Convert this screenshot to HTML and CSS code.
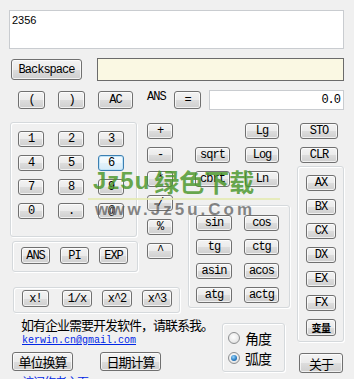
FILE: index.html
```html
<!DOCTYPE html>
<html>
<head>
<meta charset="utf-8">
<link rel="stylesheet" href="styles.css">
</head>
<body>
<div class="win">
  <div class="display">2356</div>
  <div class="row2">
    <button class="btn mono bksp">Backspace</button>
    <div class="yellow"></div>
  </div>
  <div class="row3">
    <button class="btn mono paren p1">(</button>
    <button class="btn mono paren p2">)</button>
    <button class="btn mono ac">AC</button>
    <span class="anslbl mono">ANS</span>
    <button class="btn mono eq">=</button>
    <div class="result mono">0.0</div>
  </div>
  <div class="main">
    <div class="colL">
      <div class="top">
        <div class="stack">
          <div class="group keypad">
            <button class="btn mono">1</button>
            <button class="btn mono">2</button>
            <button class="btn mono">3</button>
            <button class="btn mono">4</button>
            <button class="btn mono">5</button>
            <button class="btn mono focus">6</button>
            <button class="btn mono">7</button>
            <button class="btn mono">8</button>
            <button class="btn mono">9</button>
            <button class="btn mono">0</button>
            <button class="btn mono">.</button>
            <button class="btn mono">@</button>
          </div>
          <div class="group consts">
            <button class="btn mono">ANS</button>
            <button class="btn mono">PI</button>
            <button class="btn mono">EXP</button>
          </div>
        </div>
        <div class="ops">
          <button class="btn mono">+</button>
          <button class="btn mono">-</button>
          <button class="btn mono">*</button>
          <button class="btn mono">/</button>
          <button class="btn mono">%</button>
          <button class="btn mono">^</button>
        </div>
      </div>
      <div class="group powers">
        <button class="btn mono fact">x!</button>
        <button class="btn mono">1/x</button>
        <button class="btn mono">x^2</button>
        <button class="btn mono">x^3</button>
      </div>
      <div class="note cjk">如有企业需要开发软件，请联系我。</div>
      <a class="email">kerwin.cn@gmail.com</a>
      <div class="bottom-btns">
        <button class="btn cjk big unit">单位换算</button>
        <button class="btn cjk big date">日期计算</button>
      </div>
      <div class="cutlink cjk">访问作者主页</div>
    </div>
    <div class="colM">
      <div class="fnrow first"><button class="btn mono fn right">Lg</button></div>
      <div class="fnrow"><button class="btn mono fn left">sqrt</button><button class="btn mono fn right">Log</button></div>
      <div class="fnrow"><button class="btn mono fn left">cbrt</button><button class="btn mono fn right">Ln</button></div>
      <div class="group trig">
        <button class="btn mono">sin</button>
        <button class="btn mono">cos</button>
        <button class="btn mono">tg</button>
        <button class="btn mono">ctg</button>
        <button class="btn mono">asin</button>
        <button class="btn mono">acos</button>
        <button class="btn mono">atg</button>
        <button class="btn mono">actg</button>
      </div>
      <div class="group radios cjk">
        <div class="radio-row"><span class="radio"></span><span>角度</span></div>
        <div class="radio-row"><span class="radio on"></span><span>弧度</span></div>
      </div>
    </div>
    <div class="colR">
      <button class="btn mono mem">STO</button>
      <button class="btn mono mem second">CLR</button>
      <div class="group regs">
        <button class="btn mono">AX</button>
        <button class="btn mono">BX</button>
        <button class="btn mono">CX</button>
        <button class="btn mono">DX</button>
        <button class="btn mono">EX</button>
        <button class="btn mono">FX</button>
        <button class="btn cjk var">变量</button>
      </div>
      <button class="btn cjk big about">关于</button>
    </div>
  </div>
  <div class="wm-line"></div>
  <div class="wm-green"><span class="wm-lat">Jz5u</span><span class="wm-cjk">绿色下载</span></div>
  <div class="wm-gray">www.Jz5u.Com</div>
</div>
</body>
</html>
```

FILE: styles.css
```css
* { box-sizing: border-box; }
html, body { margin: 0; padding: 0; }
body { background: #f0f0f0; }

.win {
  position: relative;
  width: 354px;
  height: 379px;
  overflow: hidden;
  background: #f0f0f0;
  font-family: "Liberation Sans", Arial, sans-serif;
  font-size: 11px;
  color: #000;
}

.mono {
  font-family: "Liberation Mono", "Courier New", monospace;
  font-size: 12px;
  letter-spacing: -1px;
}
.cjk {
  font-family: "Noto Sans CJK SC", "Liberation Sans", sans-serif;
  font-size: 13px;
  letter-spacing: -1px;
}

.btn {
  display: flex;
  align-items: center;
  justify-content: center;
  margin: 0;
  padding: 0;
  height: 16px;
  border: 1px solid #707070;
  border-radius: 3px;
  background: linear-gradient(#f3f3f3 0%, #ebebeb 50%, #dddddd 51%, #cfcfcf 100%);
  box-shadow: inset 0 0 0 1px rgba(255,255,255,0.7);
  color: #000;
  line-height: 1;
  white-space: nowrap;
}
.btn.focus {
  border-color: #3c7fb1;
  background: linear-gradient(#f6fbfe 0%, #eef7fc 50%, #e2f1fa 51%, #d5ebf8 100%);
  box-shadow: inset 0 0 0 1px #bfe3f8;
}

.group {
  border: 1px solid #d5d9dc;
  border-radius: 3px;
  box-shadow: 1px 1px 0 #ffffff, inset 1px 1px 0 #ffffff;
}

/* top section */
.display {
  margin: 10px 0 0 9px;
  width: 335px;
  height: 39px;
  background: #fff;
  border: 1px solid #c9ccd0;
  padding: 3px 0 0 2px;
  font-size: 11px;
  line-height: 13px;
}

.row2 {
  display: flex;
  align-items: center;
  margin-top: 9px;
  height: 23px;
}
.bksp { margin-left: 11px; width: 71px; height: 21px; }
.yellow {
  margin-left: 15px;
  width: 247px;
  height: 23px;
  background: #faf8e3;
  border: 1px solid #6b6b6b;
}

.row3 {
  display: flex;
  align-items: center;
  margin-top: 9px;
  height: 20px;
}
.paren { width: 27px; height: 18px; }
.p1 { margin-left: 18px; }
.p2 { margin-left: 13px; }
.ac { margin-left: 13px; width: 35px; height: 18px; }
.anslbl {
  margin-left: 14px;
  width: 27px;
  align-self: flex-start;
  line-height: 12px;
  padding-top: 1px;
}
.eq { width: 27px; height: 18px; }
.result {
  margin-left: 8px;
  width: 135px;
  height: 20px;
  background: #fff;
  border: 1px solid #c9ccd0;
  text-align: right;
  padding-right: 3px;
  line-height: 18px;
}

/* main section */
.main {
  display: flex;
  align-items: flex-start;
  margin-top: 12px;
}

.colL { margin-left: 10px; width: 170px; }
.top { display: flex; align-items: flex-start; }
.stack { width: 128px; }
.keypad {
  width: 127px;
  height: 115px;
  padding: 8px 0 0 7px;
  display: grid;
  grid-template-columns: 26px 26px 26px;
  grid-auto-rows: 16px;
  column-gap: 14px;
  row-gap: 8px;
  align-content: start;
}
.consts {
  margin: 4px 0 0 2px;
  width: 126px;
  height: 31px;
  padding: 5px 0 0 8px;
  display: flex;
  gap: 10px;
}
.consts .btn { width: 29px; height: 17px; }

.ops {
  margin: 1px 0 0 9px;
  display: flex;
  flex-direction: column;
  gap: 8px;
}
.ops .btn { width: 26px; }

.powers {
  margin: 15px 0 0 3px;
  width: 167px;
  height: 26px;
  padding: 2px 0 0 8px;
  display: flex;
  gap: 10px;
}
.powers .btn { width: 30px; height: 17px; }
.powers .fact { width: 27px; margin-right: 3px; }

.note {
  margin: 5px 0 0 11px;
  line-height: 14px;
  white-space: nowrap;
}
.email {
  display: block;
  margin: 3px 0 0 12px;
  font-family: "Liberation Mono", "Courier New", monospace;
  font-size: 10px;
  line-height: 11px;
  color: #0026e6;
  text-decoration: underline;
}
.bottom-btns {
  display: flex;
  margin-top: 6px;
}
.big { height: 19px; }
.unit { margin-left: 2px; width: 61px; }
.date { margin-left: 27px; width: 61px; }
.cutlink {
  margin: 4px 0 0 12px;
  color: #0026e6;
  font-size: 12px;
  line-height: 14px;
  text-decoration: underline;
}

.colM { margin-left: 8px; width: 102px; }
.fnrow { display: flex; margin-top: 8px; }
.fnrow.first { margin-top: 1px; }
.fn.left { margin-left: 7px; width: 35px; }
.fn.right { width: 34px; }
.fnrow .left + .right { margin-left: 15px; }
.fnrow.first .right { margin-left: 57px; }

.trig {
  margin-top: 18px;
  width: 102px;
  height: 103px;
  padding: 9px 0 0 7px;
  display: grid;
  grid-template-columns: 36px 35px;
  grid-auto-rows: 16px;
  column-gap: 12px;
  row-gap: 8px;
  align-content: start;
}

.radios {
  margin: 15px 0 0 34px;
  width: 63px;
  height: 49px;
  padding: 7px 0 0 5px;
  display: flex;
  flex-direction: column;
  gap: 6px;
  font-size: 14px;
}
.radio-row {
  display: flex;
  align-items: center;
  gap: 5px;
  height: 14px;
  line-height: 14px;
}
.radio {
  width: 12px;
  height: 12px;
  border-radius: 50%;
  border: 1px solid #8d8f91;
  background: radial-gradient(circle at 45% 40%, #ffffff 0%, #ececec 55%, #cfcfcf 100%);
  position: relative;
}
.radio.on::after {
  content: "";
  position: absolute;
  left: 2px;
  top: 2px;
  width: 6px;
  height: 6px;
  border-radius: 50%;
  background: radial-gradient(circle at 40% 35%, #9ad6fb 0%, #2d7fc4 55%, #134f8c 100%);
}

.colR { margin-left: 7px; width: 49px; }
.mem { margin: 1px 0 0 3px; width: 38px; }
.mem.second { margin-top: 8px; }
.regs {
  margin-top: 3px;
  width: 47px;
  height: 176px;
  padding: 8px 0 0 8px;
  display: flex;
  flex-direction: column;
  gap: 8px;
}
.regs .btn { width: 30px; }
.regs .var { height: 17px; font-size: 10px; letter-spacing: -0.5px; font-weight: bold; }
.about { margin: 11px 0 0 2px; width: 44px; height: 20px; }

/* watermark overlay */
.wm-line {
  position: absolute;
  left: 88px;
  top: 198px;
  width: 192px;
  height: 2px;
  background: rgba(228, 234, 178, 0.85);
}
.wm-green {
  position: absolute;
  left: 93px;
  top: 168px;
  height: 26px;
  line-height: 26px;
  color: rgba(72, 150, 40, 0.82);
  font-weight: bold;
  white-space: nowrap;
  display: flex;
  align-items: center;
}
.wm-lat {
  font-family: "Liberation Sans", sans-serif;
  font-size: 24px;
  letter-spacing: 1px;
}
.wm-cjk {
  margin-left: 4px;
  font-family: "Noto Sans CJK SC", sans-serif;
  font-size: 25px;
}
.wm-gray {
  position: absolute;
  left: 95px;
  top: 201px;
  line-height: 17px;
  font-family: "Liberation Sans", sans-serif;
  font-size: 17px;
  font-weight: bold;
  letter-spacing: 3px;
  color: rgba(95, 95, 95, 0.75);
  white-space: nowrap;
}
```
